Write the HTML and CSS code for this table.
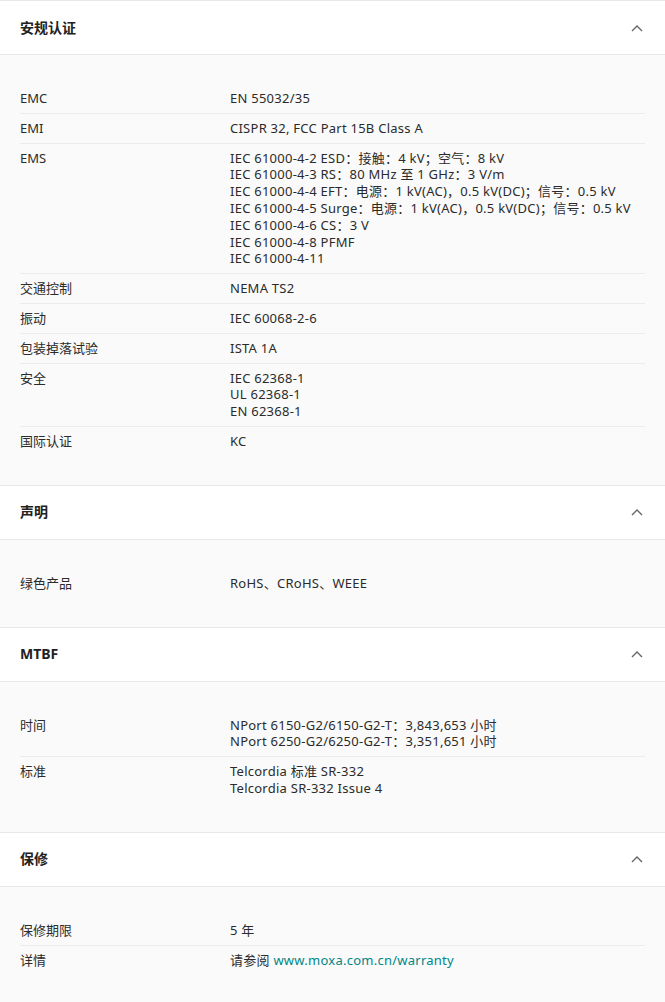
FILE: index.html
```html
<!DOCTYPE html>
<html lang="zh-CN">
<head>
<meta charset="utf-8">
<title>规格</title>
<link rel="stylesheet" href="styles.css">
</head>
<body>
<div class="specs">
  <section class="acc">
    <header class="acc-head">
      <h3 class="acc-title">安规认证</h3>
      <svg class="chev" viewBox="0 0 12 8" width="12" height="8"><polyline points="1,7 6,2 11,7"/></svg>
    </header>
    <div class="acc-body">
      <div class="row"><div class="lbl">EMC</div><div class="val">EN 55032/35</div></div>
      <div class="row"><div class="lbl">EMI</div><div class="val">CISPR 32, FCC Part 15B Class A</div></div>
      <div class="row"><div class="lbl">EMS</div><div class="val">IEC 61000-4-2 ESD：接触：4 kV；空气：8 kV<br>IEC 61000-4-3 RS：80 MHz 至 1 GHz：3 V/m<br>IEC 61000-4-4 EFT：电源：1 kV(AC)，0.5 kV(DC)；信号：0.5 kV<br>IEC 61000-4-5 Surge：电源：1 kV(AC)，0.5 kV(DC)；信号：0.5 kV<br>IEC 61000-4-6 CS：3 V<br>IEC 61000-4-8 PFMF<br>IEC 61000-4-11</div></div>
      <div class="row"><div class="lbl">交通控制</div><div class="val">NEMA TS2</div></div>
      <div class="row"><div class="lbl">振动</div><div class="val">IEC 60068-2-6</div></div>
      <div class="row"><div class="lbl">包装掉落试验</div><div class="val">ISTA 1A</div></div>
      <div class="row"><div class="lbl">安全</div><div class="val">IEC 62368-1<br>UL 62368-1<br>EN 62368-1</div></div>
      <div class="row"><div class="lbl">国际认证</div><div class="val">KC</div></div>
    </div>
  </section>
  <section class="acc">
    <header class="acc-head">
      <h3 class="acc-title">声明</h3>
      <svg class="chev" viewBox="0 0 12 8" width="12" height="8"><polyline points="1,7 6,2 11,7"/></svg>
    </header>
    <div class="acc-body">
      <div class="row"><div class="lbl">绿色产品</div><div class="val">RoHS、CRoHS、WEEE</div></div>
    </div>
  </section>
  <section class="acc">
    <header class="acc-head">
      <h3 class="acc-title">MTBF</h3>
      <svg class="chev" viewBox="0 0 12 8" width="12" height="8"><polyline points="1,7 6,2 11,7"/></svg>
    </header>
    <div class="acc-body">
      <div class="row"><div class="lbl">时间</div><div class="val">NPort 6150-G2/6150-G2-T：3,843,653 小时<br>NPort 6250-G2/6250-G2-T：3,351,651 小时</div></div>
      <div class="row"><div class="lbl">标准</div><div class="val">Telcordia 标准 SR-332<br>Telcordia SR-332 Issue 4</div></div>
    </div>
  </section>
  <section class="acc">
    <header class="acc-head">
      <h3 class="acc-title">保修</h3>
      <svg class="chev" viewBox="0 0 12 8" width="12" height="8"><polyline points="1,7 6,2 11,7"/></svg>
    </header>
    <div class="acc-body">
      <div class="row"><div class="lbl">保修期限</div><div class="val">5 年</div></div>
      <div class="row"><div class="lbl">详情</div><div class="val">请参阅 <a class="link" href="#">www.moxa.com.cn/warranty</a></div></div>
    </div>
  </section>
</div>
</body>
</html>
```

FILE: styles.css
```css
html, body {
  margin: 0;
  padding: 0;
  background: #fafafa;
}
body {
  font-family: "Noto Sans", "Noto Sans CJK SC", sans-serif;
  color: #333;
  font-size: 13px;
}
.specs {
  display: flex;
  flex-direction: column;
}
.acc {
  border-top: 1px solid #e8e8e8;
}
.acc-head {
  height: 53px;
  background: #fff;
  border-bottom: 1px solid #e8e8e8;
  display: flex;
  align-items: center;
  justify-content: space-between;
  padding: 0 22px 0 20px;
}
.acc-title {
  margin: 0 0 2px 0;
  font-size: 14px;
  font-weight: 700;
  color: #222;
}
.chev {
  display: block;
}
.chev polyline {
  fill: none;
  stroke: #666;
  stroke-width: 1.4;
}
.acc-body {
  background: #fafafa;
  padding: 29px 20px 29px 20px;
}
.row {
  display: grid;
  grid-template-columns: 210px 1fr;
  padding: 6px 0;
  line-height: 16.8px;
  border-bottom: 1px solid #ececec;
}
.row:last-child {
  border-bottom: none;
}
.lbl, .val {
  color: #2b2b2b;
}
.val {
  letter-spacing: 0.25px;
}
.link {
  color: #008787;
  text-decoration: none;
}
```
